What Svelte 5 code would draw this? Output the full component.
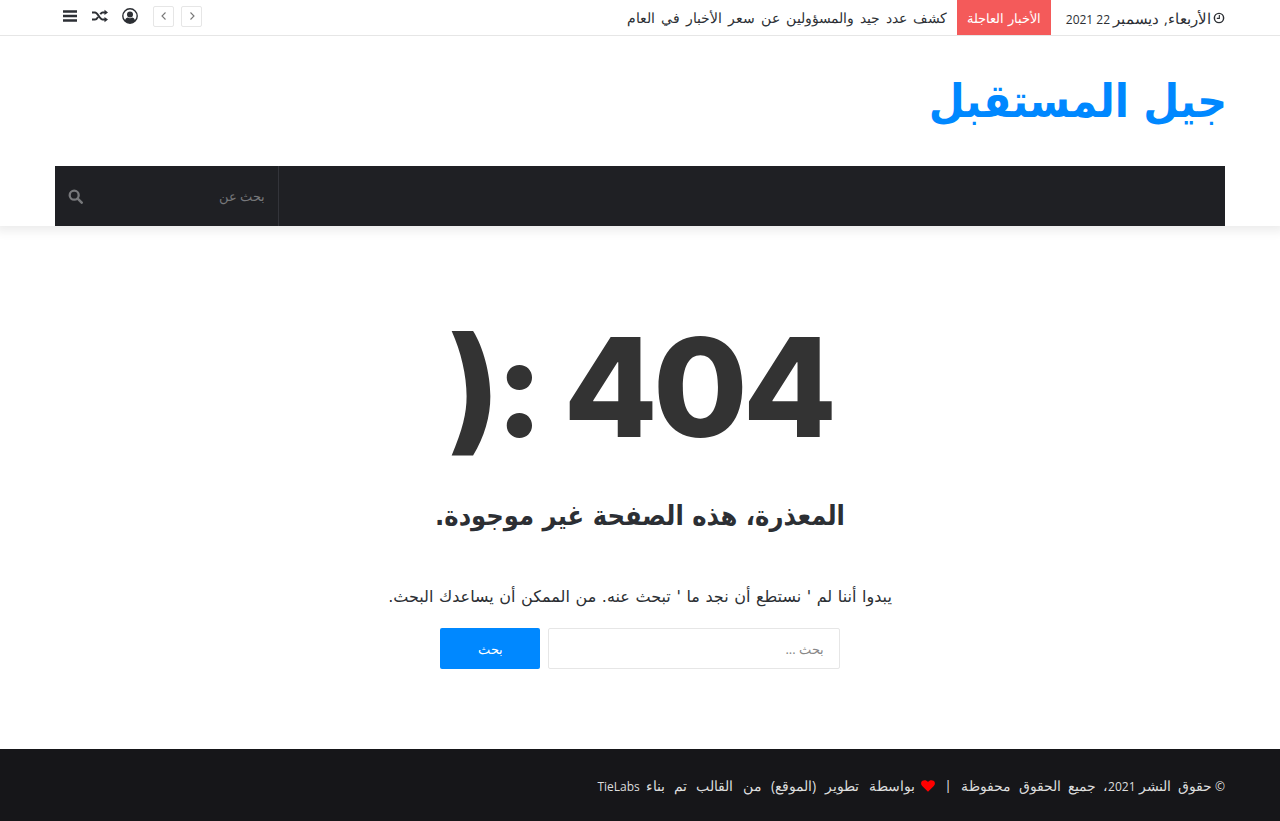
<script lang="ts">
  let query = $state('');
</script>

<div class="page" dir="rtl">
  <header class="site-header">
    <div class="topbar">
      <div class="container topbar-inner">
        <div class="date">
          <svg class="clock" viewBox="0 0 14 14" width="12" height="12" aria-hidden="true">
            <circle cx="7" cy="7" r="5.4" fill="none" stroke="currentColor" stroke-width="1.7"></circle>
            <path d="M7.4 3.6v3.9H4.4" fill="none" stroke="currentColor" stroke-width="1.3"></path>
          </svg>
          <span><span class="ar">الأربعاء, ديسمبر</span> 22 2021</span>
        </div>
        <div class="breaking">
          <span class="breaking-label">الأخبار العاجلة</span>
          <span class="breaking-text ar">كشف عدد جيد والمسؤولين عن سعر الأخبار في العام</span>
        </div>
        <div class="top-tools">
          <div class="arrows">
            <button type="button" aria-label="التالي">
              <svg viewBox="0 0 8 10" width="8" height="10" aria-hidden="true"><path d="M2.5 1.5 6 5 2.5 8.5" fill="none" stroke="currentColor" stroke-width="1.1"></path></svg>
            </button>
            <button type="button" aria-label="السابق">
              <svg viewBox="0 0 8 10" width="8" height="10" aria-hidden="true"><path d="M5.5 1.5 2 5l3.5 3.5" fill="none" stroke="currentColor" stroke-width="1.1"></path></svg>
            </button>
          </div>
          <svg class="tool-user" viewBox="0 0 16 16" width="16" height="16" aria-hidden="true">
            <circle cx="8" cy="8" r="7.2" fill="none" stroke="currentColor" stroke-width="1.4"></circle>
            <circle cx="8" cy="6.4" r="3" fill="currentColor"></circle>
            <path d="M2.8 13c.6-2.6 2-3.5 3.1-3.5.7.5 1.3.7 2.1.7s1.400-.2 2.100-.7c1.100 0 2.500.9 3.100 3.500-1.300 1.300-3.100 2.100-5.200 2.100S4.100 14.300 2.800 13Z" fill="currentColor"></path>
          </svg>
          <svg viewBox="0 0 16 14" width="16" height="14" aria-hidden="true">
            <path d="M0 3.400h3c2.800 0 4.800 7.200 7.600 7.200H13M0 10.600h3c1.200 0 2.200-1.300 3-2.700M8.300 5.300c.7-1 1.400-1.900 2.300-1.900H13" fill="none" stroke="currentColor" stroke-width="2"></path>
            <path d="M12.500 0.800 16 3.400l-3.500 2.600ZM12.500 8 16 10.600l-3.500 2.600Z" fill="currentColor"></path>
          </svg>
          <svg viewBox="0 0 14 12" width="14" height="12" aria-hidden="true">
            <path d="M0 1.500h14M0 6h14M0 10.500h14" fill="none" stroke="currentColor" stroke-width="2.300"></path>
          </svg>
        </div>
      </div>
    </div>

    <div class="container logo-row">
      <a class="logo" href="#top">جيل المستقبل</a>
    </div>

    <div class="container">
      <nav class="main-nav">
        <div class="nav-search">
          <span>بحث عن</span>
          <svg viewBox="0 0 15 15" width="15" height="15" aria-hidden="true">
            <circle cx="6.200" cy="6.200" r="4.500" fill="none" stroke="currentColor" stroke-width="2.300"></circle>
            <path d="m9.700 9.700 4 4" fill="none" stroke="currentColor" stroke-width="2.500" stroke-linecap="round"></path>
          </svg>
        </div>
      </nav>
    </div>
  </header>

  <main class="not-found">
    <h1 class="code">404 :(</h1>
    <h2 class="title">المعذرة، هذه الصفحة غير موجودة.</h2>
    <p class="desc">يبدوا أننا لم ' نستطع أن نجد ما ' تبحث عنه. من الممكن أن يساعدك البحث.</p>
    <form class="search-form" onsubmit={(e) => e.preventDefault()}>
      <input type="text" placeholder="بحث ..." bind:value={query} />
      <button type="submit">بحث</button>
    </form>
  </main>

  <footer class="site-footer">
    <div class="container footer-inner">
      <span>© <span class="ar">حقوق النشر</span> 2021<span class="ar">، جميع الحقوق محفوظة</span></span>
      <span class="sep">|</span>
      <span class="credit">
        <svg class="heart" viewBox="0 0 14 12" width="14" height="12" aria-hidden="true">
          <path d="M7 11.800 1.200 6.100C-.5 4.300-.1 1.700 1.500.8 3.300-.3 5.700.1 7 2.100 8.300.1 10.700-.3 12.500.8c1.600.9 2 3.500.3 5.300Z" fill="#f00"></path>
        </svg>
        <span class="ar">بواسطة تطوير (الموقع) من القالب تم بناء</span> TieLabs
      </span>
    </div>
  </footer>
</div>

<style>
  :global(body) {
    background: #fff;
    color: #2c2f34;
    font-family: "Open Sans", sans-serif;
    font-size: 13px;
  }

  .page {
    min-height: 821px;
    display: flex;
    flex-direction: column;
  }

  .container {
    width: 1170px;
    margin: 0 auto;
  }

  .ar {
    font-size: 14px;
    word-spacing: 2.4px;
  }

  .site-header {
    box-shadow: 0 0 10px 5px rgba(0, 0, 0, 0.08);
  }

  .topbar {
    height: 35px;
    border-bottom: 1px solid #e6e6e6;
  }

  .topbar-inner {
    display: flex;
    align-items: center;
    height: 35px;
    font-size: 12px;
  }

  .date {
    display: flex;
    align-items: center;
    gap: 2px;
    color: #2c2f34;
    white-space: nowrap;
  }

  .date .ar {
    font-size: 15px;
    word-spacing: 1px;
  }

  .clock {
    flex: 0 0 auto;
  }

  .breaking {
    display: flex;
    align-items: center;
    flex: 1;
    height: 35px;
    margin-right: 15px;
    min-width: 0;
  }

  .breaking-label {
    display: flex;
    align-items: center;
    height: 35px;
    padding: 0 10px;
    background: #f45a5a;
    color: #fff;
    font-size: 13px;
    white-space: nowrap;
  }

  .breaking-text {
    margin-right: 10px;
    color: #2c2f34;
    white-space: nowrap;
  }

  .top-tools {
    display: flex;
    align-items: center;
    gap: 15px;
    color: #2c2f34;
    padding: 0 0 3px 8px;
  }

  .tool-user {
    margin-left: -1px;
  }

  .arrows {
    display: flex;
    gap: 7px;
  }

  .arrows button {
    display: flex;
    align-items: center;
    justify-content: center;
    width: 21px;
    height: 21px;
    padding: 0;
    background: #fff;
    border: 1px solid #e6e6e6;
    border-radius: 2px;
    color: #777;
  }

  .logo-row {
    display: flex;
    align-items: center;
    height: 130px;
  }

  .logo {
    margin-right: -2px;
    color: #0088ff;
    font-family: "DejaVu Sans Condensed", "DejaVu Sans", sans-serif;
    font-size: 46px;
    font-weight: 700;
    line-height: 1;
    text-decoration: none;
  }

  .main-nav {
    display: flex;
    justify-content: flex-end;
    height: 60px;
    background: #1f2024;
  }

  .nav-search {
    box-sizing: border-box;
    display: flex;
    align-items: center;
    justify-content: space-between;
    width: 224px;
    padding: 0 13px;
    border-right: 1px solid #33343a;
    color: #77787b;
  }

  .not-found {
    flex: 1;
    display: flex;
    flex-direction: column;
    align-items: center;
    padding-top: 66px;
  }

  .code {
    margin: 0;
    color: #333;
    font-family: Inter, sans-serif;
    font-size: 137px;
    font-weight: 800;
    letter-spacing: -5px;
    line-height: 190px;
  }

  .title {
    margin: 16px 0 0;
    color: #2c2f34;
    font-family: "DejaVu Sans Condensed", "DejaVu Sans", sans-serif;
    font-size: 27px;
    font-weight: 700;
    line-height: 36px;
  }

  .desc {
    margin: 51px 0 0;
    color: #2c2f34;
    font-family: "DejaVu Sans", sans-serif;
    font-size: 16px;
    word-spacing: 0.5px;
    line-height: 24px;
  }

  .search-form {
    display: flex;
    gap: 8px;
    width: 400px;
    margin-top: 19px;
  }

  .search-form input {
    flex: 1;
    min-width: 0;
    box-sizing: border-box;
    height: 41px;
    padding: 0 15px;
    background: #fff;
    border: 1px solid #e6e6e6;
    border-radius: 2px;
    font: 13px "Open Sans", sans-serif;
    outline: none;
  }

  .search-form input::placeholder {
    color: #888;
  }

  .search-form button {
    width: 100px;
    height: 41px;
    background: #0088ff;
    border: 0;
    border-radius: 2px;
    color: #fff;
    font: 13px "Open Sans", sans-serif;
  }

  .site-footer {
    height: 72px;
    background: #161619;
    color: #ddd;
  }

  .footer-inner {
    display: flex;
    align-items: center;
    gap: 10px;
    height: 72px;
    font-size: 12px;
  }

  .footer-inner .ar {
    word-spacing: 3.6px;
  }

  .credit {
    word-spacing: 3px;
  }

  .footer-inner .credit .ar {
    word-spacing: 5.6px;
  }

  .sep {
    color: #fff;
  }

  .heart {
    vertical-align: -1px;
  }
</style>
